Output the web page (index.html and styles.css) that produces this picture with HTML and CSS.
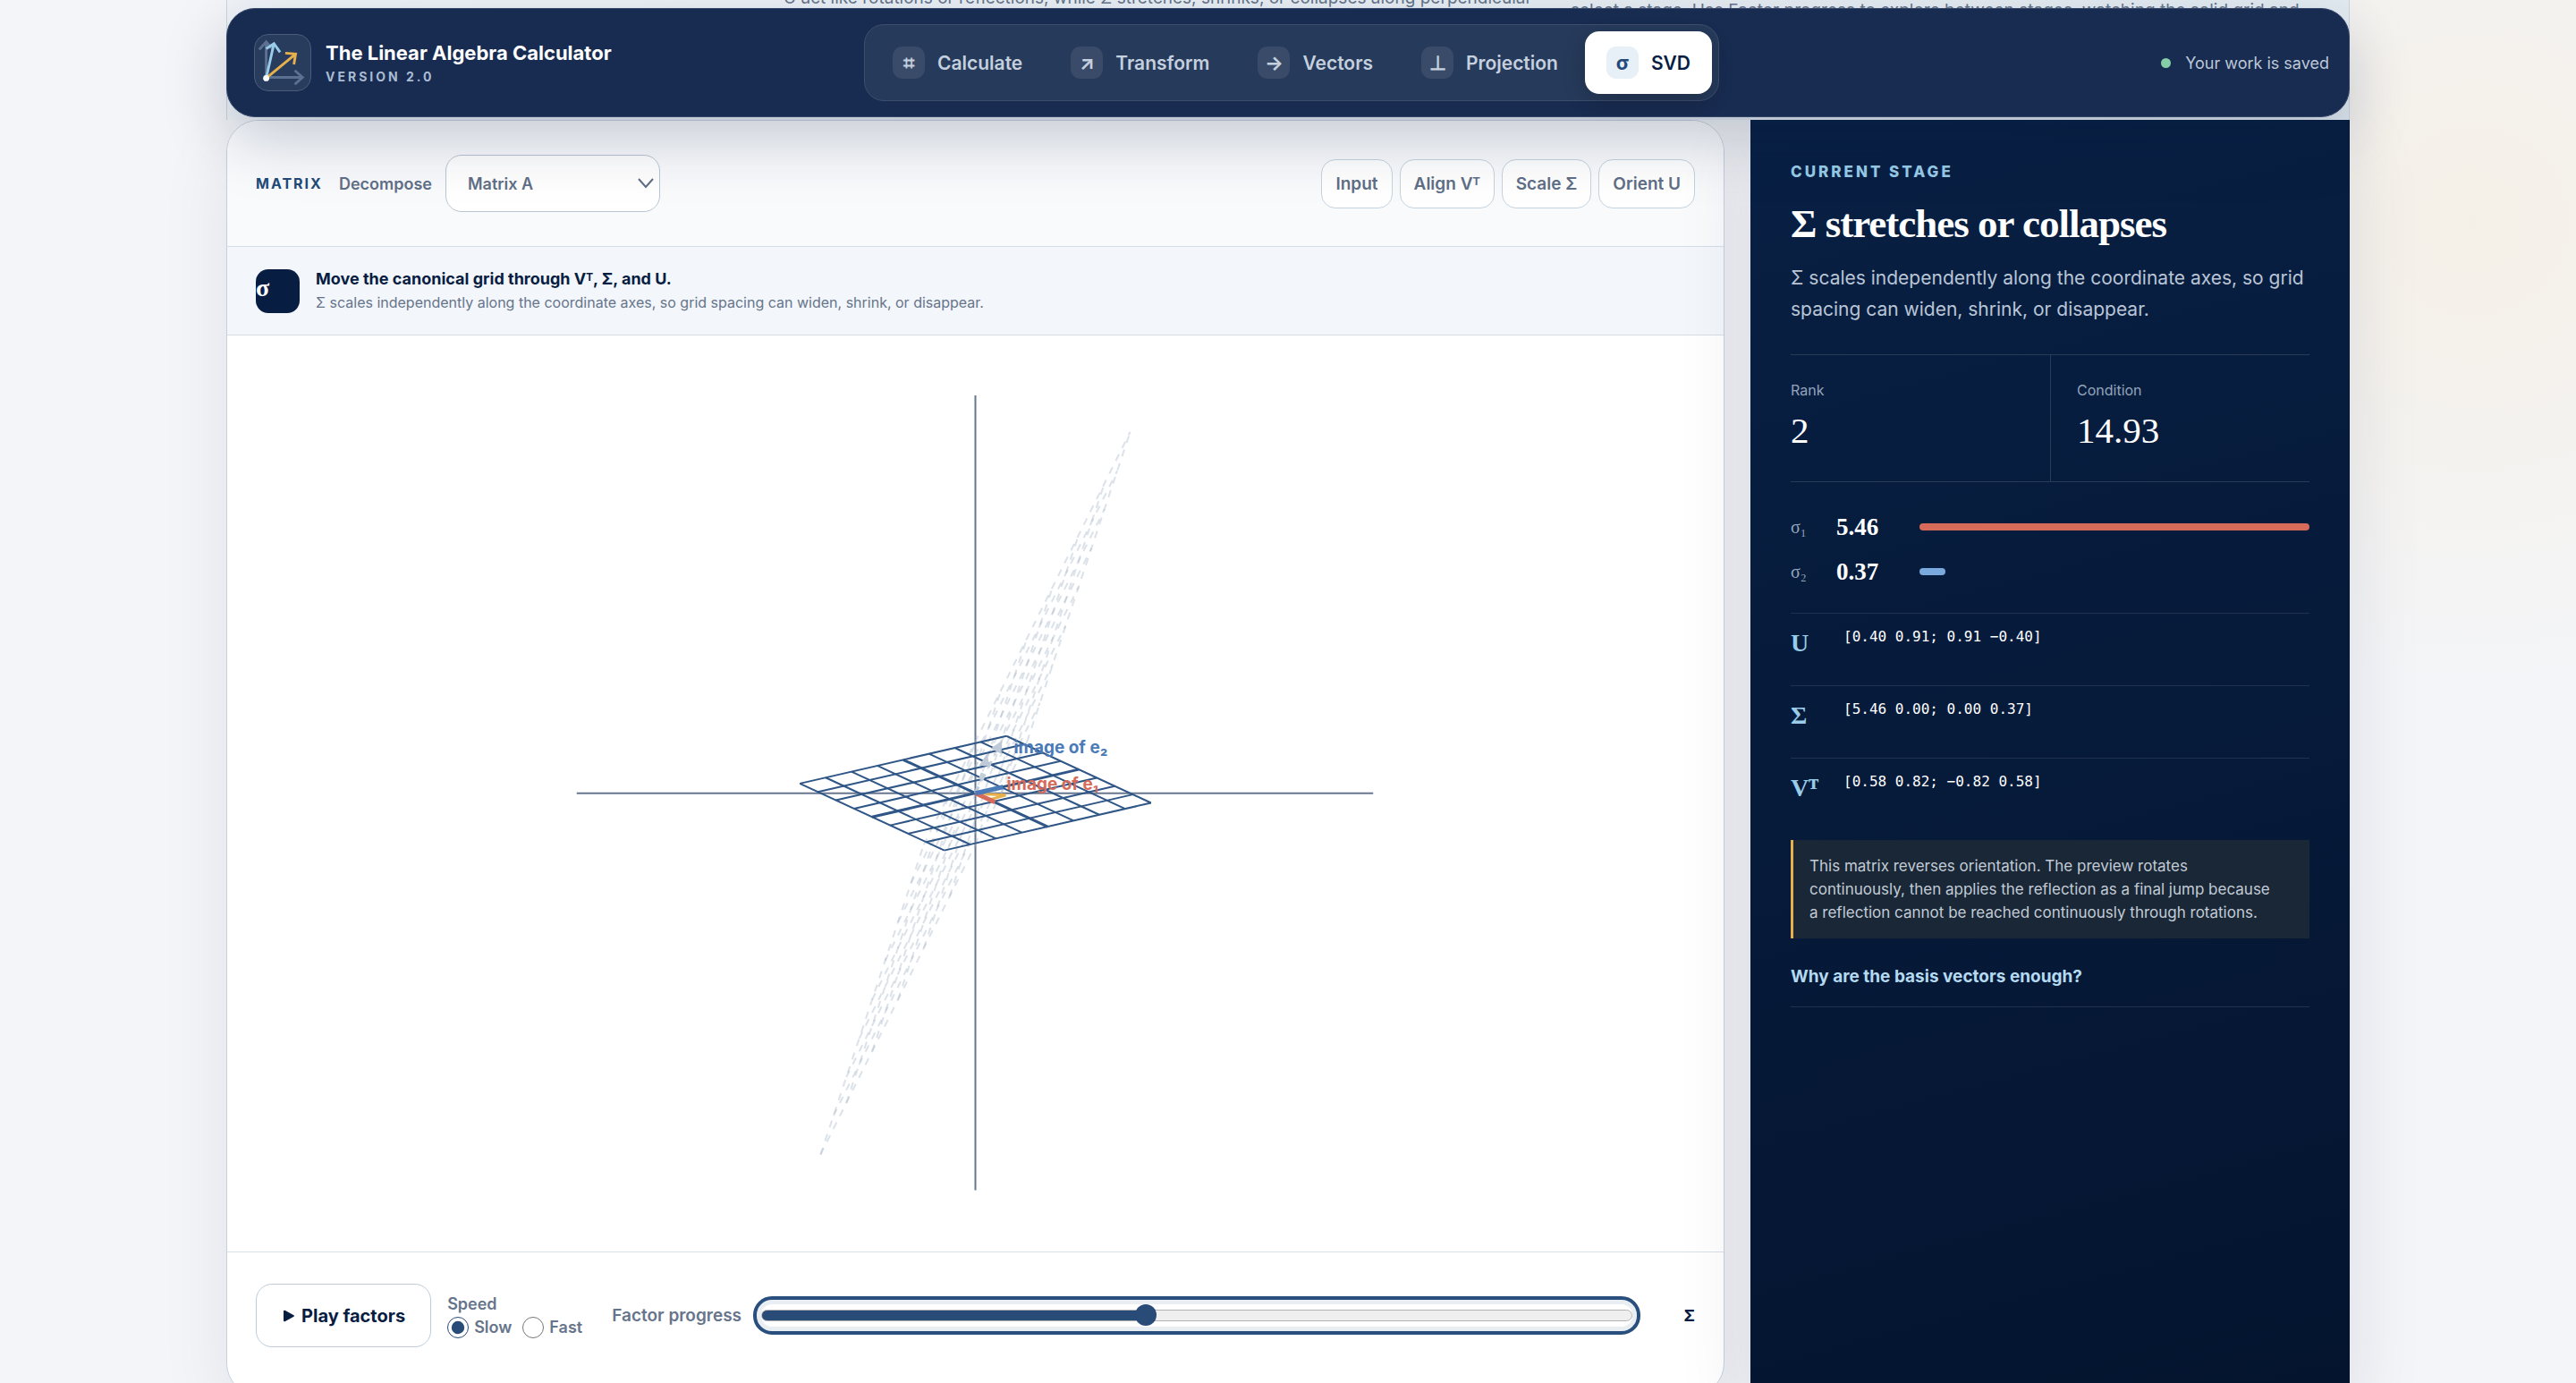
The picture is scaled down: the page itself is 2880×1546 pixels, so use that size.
FILE: index.html
```html
<!DOCTYPE html>
<html lang="en">

<head>
    <meta charset="UTF-8">
    <meta name="viewport" content="width=device-width, initial-scale=1.0">
    <title>The Linear Algebra Calculator</title>
    <link rel="stylesheet" href="styles.css">
</head>

<body>
    <header class="topbar">
        <div class="brand">
            <svg class="brand-mark" viewBox="0 0 64 64" fill="none" aria-hidden="true">
                <g stroke="#5c7091" stroke-width="3">
                    <path d="M13 49V8M5 17l8-9 8 9" />
                    <path d="M13 49h42M46 41l9 8-9 8" />
                </g>
                <path stroke="#98cce9" stroke-width="3" d="M13 50L22 10M13 16l9-6 7 10" />
                <path stroke="#e8b04a" stroke-width="3" d="M13 50L47 22M35 21l12 1-2 12" />
                <circle cx="13" cy="50" r="3.5" fill="#fff" />
            </svg>
            <div>
                <strong class="brand-name">The Linear Algebra Calculator</strong>
                <span class="brand-version">Version 2.0</span>
            </div>
        </div>
        <nav class="tabs" aria-label="Tools">
            <button class="tab" type="button"><span class="tab-icon">⌗</span>Calculate</button>
            <button class="tab" type="button"><span class="tab-icon">↗</span>Transform</button>
            <button class="tab" type="button"><span class="tab-icon">→</span>Vectors</button>
            <button class="tab" type="button"><span class="tab-icon">⊥</span>Projection</button>
            <button class="tab active" type="button"><span class="tab-icon">σ</span>SVD</button>
        </nav>
        <p class="saved">Your work is saved</p>
    </header>

    <main class="page">
        <section class="intro">
            <p class="intro-main">U act like rotations or reflections, while Σ stretches, shrinks, or collapses along perpendicular</p>
            <p class="intro-side">select a stage. Use Factor progress to explore between stages, watching the solid grid and</p>
        </section>

        <div class="workspace">
            <section class="board">
                <div class="toolbar">
                    <span class="toolbar-title">Matrix</span>
                    <label class="field-label" for="matrix">Decompose</label>
                    <div class="select-wrap">
                        <select id="matrix">
                            <option>Matrix A</option>
                        </select>
                        <svg viewBox="0 0 20 12" fill="none" aria-hidden="true"><path d="M2 1l8 9 8-9" stroke="#5f6f86" stroke-width="2" /></svg>
                    </div>
                    <div class="stages">
                        <button type="button">Input</button>
                        <button type="button">Align Vᵀ</button>
                        <button type="button">Scale Σ</button>
                        <button type="button">Orient U</button>
                    </div>
                </div>

                <div class="prompt">
                    <span class="prompt-icon">σ</span>
                    <div>
                        <strong>Move the canonical grid through Vᵀ, Σ, and U.</strong>
                        <p>Σ scales independently along the coordinate axes, so grid spacing can widen, shrink, or disappear.</p>
                    </div>
                </div>

                <svg class="plot" viewBox="-837 -512 1674 1025" role="img" aria-label="Grid under the current factors">
                    <path class="axis" d="M-446 0H445M0 -445V444" />
                    <!-- full product of the factors -->
                    <g transform="matrix(14.43 -43.3 28.87 -57.73 0 0)">
                        <path class="ghost" d="M-4 -4H4M-4 -3H4M-4 -2H4M-4 -1H4M-4 0H4M-4 1H4M-4 2H4M-4 3H4M-4 4H4" />
                        <path class="ghost" d="M-4 -4V4M-3 -4V4M-2 -4V4M-1 -4V4M0 -4V4M1 -4V4M2 -4V4M3 -4V4M4 -4V4" />
                    </g>
                    <!-- current stage -->
                    <g transform="matrix(20.2 9.35 28.9 -6.65 0 0)">
                        <path class="grid" d="M-4 -4H4M-4 -3H4M-4 -2H4M-4 -1H4M-4 1H4M-4 2H4M-4 3H4M-4 4H4" />
                        <path class="grid" d="M-4 -4V4M-3 -4V4M-2 -4V4M-1 -4V4M1 -4V4M2 -4V4M3 -4V4M4 -4V4" />
                        <path class="grid main" d="M-4 0H4M0 -4V4" />
                    </g>
                    <path class="ghost-vector" d="M0 0L10 -30M0 0L22 -44" />
                    <path class="ghost-head" d="M13 -44L4 -31L16 -30ZM30 -59L17 -50L29 -44Z" />
                    <path class="sum" d="M11 1L34 2L17 7" />
                    <path class="vector e1" d="M0 0L22 10" />
                    <path class="vector e2" d="M0 0L31 -7" />
                    <text class="plot-label e2" x="43" y="-45">image of e₂</text>
                    <text class="plot-label e1" x="35" y="-4">image of e₁</text>
                </svg>

                <div class="controls">
                    <button class="play" type="button"><svg viewBox="0 0 14 14" aria-hidden="true"><path d="M1 2q0-2 2-1l9 5q2 1 0 2l-9 5q-2 1-2-1z" /></svg>Play factors</button>
                    <fieldset class="speed">
                        <legend>Speed</legend>
                        <label><input type="radio" name="speed" checked>Slow</label>
                        <label><input type="radio" name="speed">Fast</label>
                    </fieldset>
                    <label class="progress-label" for="progress">Factor progress</label>
                    <input class="progress" id="progress" type="range" min="0" max="100" value="44">
                    <output class="progress-value" for="progress">Σ</output>
                </div>
            </section>

            <aside class="details">
                <p class="eyebrow">Current stage</p>
                <h2>Σ stretches or collapses</h2>
                <p class="lead">Σ scales independently along the coordinate axes, so grid spacing can widen, shrink, or disappear.</p>
                <dl class="facts">
                    <div>
                        <dt>Rank</dt>
                        <dd>2</dd>
                    </div>
                    <div>
                        <dt>Condition</dt>
                        <dd>14.93</dd>
                    </div>
                </dl>
                <div class="sigmas">
                    <div class="sigma"><span>σ₁</span><strong>5.46</strong><div class="bar"><i class="bar-one" style="width: 100%"></i></div></div>
                    <div class="sigma"><span>σ₂</span><strong>0.37</strong><div class="bar"><i class="bar-two" style="width: 6.7%"></i></div></div>
                </div>
                <dl class="factors">
                    <div>
                        <dt>U</dt>
                        <dd>[0.40 0.91; 0.91 −0.40]</dd>
                    </div>
                    <div>
                        <dt>Σ</dt>
                        <dd>[5.46 0.00; 0.00 0.37]</dd>
                    </div>
                    <div>
                        <dt>Vᵀ</dt>
                        <dd>[0.58 0.82; −0.82 0.58]</dd>
                    </div>
                </dl>
                <p class="note">This matrix reverses orientation. The preview rotates continuously, then applies the reflection as a final jump because a reflection cannot be reached continuously through rotations.</p>
                <details class="why">
                    <summary>Why are the basis vectors enough?</summary>
                </details>
            </aside>
        </div>
    </main>
</body>

</html>
```
FILE: styles.css
```css
* {
    box-sizing: border-box;
    margin: 0;
    padding: 0;
}

body {
    height: 100vh;
    overflow: hidden;
    font-family: Inter, "Liberation Sans", sans-serif;
    font-size: 18px;
    color: #071d42;
    background: radial-gradient(circle at 96% 16%, #f5f0e7 0, rgba(245, 240, 231, 0) 520px), #f4f5f8;
}

button,
select,
input {
    font: inherit;
    color: inherit;
}

.topbar {
    position: absolute;
    z-index: 2;
    top: 9px;
    left: 253px;
    right: 253px;
    height: 122px;
    padding: 0 22px 0 30px;
    display: grid;
    grid-template-columns: 1fr auto 1fr;
    align-items: center;
    color: #fff;
    background: #182b50;
    border: 1px solid #33466a;
    border-radius: 32px;
    box-shadow: 0 24px 70px rgba(7, 29, 66, 0.22);
}

.brand {
    display: flex;
    align-items: center;
    gap: 16px;
}

.brand-mark {
    width: 64px;
    height: 64px;
    background: #283c5e;
    border: 1px solid #4a5c7a;
    border-radius: 16px;
}

.brand-name,
.brand-version {
    display: block;
}

.brand-name {
    font-size: 22px;
    line-height: 28px;
}

.brand-version {
    margin-top: 4px;
    font-size: 14px;
    line-height: 18px;
    font-weight: 700;
    letter-spacing: 3px;
    text-transform: uppercase;
    color: #a9bcd3;
}

.tabs {
    display: flex;
    gap: 6px;
    padding: 7px;
    background: #263a5b;
    border: 1px solid #3d4f6d;
    border-radius: 22px;
}

.tab {
    height: 70px;
    padding: 0 24px;
    display: flex;
    align-items: center;
    gap: 14px;
    font-size: 21px;
    font-weight: 600;
    color: #c5d0de;
    background: none;
    border: 0;
    border-radius: 16px;
}

.tab-icon {
    width: 36px;
    height: 36px;
    display: grid;
    place-items: center;
    font-size: 22px;
    font-weight: 700;
    background: #394b69;
    border-radius: 11px;
}

.tab.active {
    color: #071d42;
    background: #fff;
    box-shadow: 0 8px 24px rgba(0, 0, 0, 0.2);
}

.tab.active .tab-icon {
    color: #234a78;
    background: #e7f0f7;
}

.saved {
    justify-self: end;
    display: flex;
    align-items: center;
    gap: 16px;
    color: #bcc8d8;
}

.saved::before {
    content: "";
    width: 11px;
    height: 11px;
    border-radius: 50%;
    background: #86cfa6;
}

.page {
    padding: 0 253px;
}

.intro {
    height: 153px;
    margin-top: -19px;
    padding-left: 622px;
    display: grid;
    grid-template-columns: 880px 1fr;
    font-size: 19px;
    line-height: 34px;
    white-space: nowrap;
    color: #66758b;
    background: linear-gradient(90deg, #f0f4f8, #e4ecf2);
    border: solid #cbd6e0;
    border-width: 0 1px;
}

.intro-side {
    padding-top: 14px;
}

.workspace {
    display: grid;
    grid-template-columns: 5fr 2fr;
    gap: 29px;
}

.board {
    overflow: hidden;
    background: #fff;
    border: 1px solid #c5d0dc;
    border-radius: 36px;
    box-shadow: 0 24px 80px rgba(7, 29, 66, 0.08);
}

.toolbar {
    height: 140px;
    padding: 0 32px;
    display: flex;
    align-items: center;
    color: #5f6f86;
    font-weight: 600;
    background: #f9fafc;
}

.toolbar-title {
    margin-right: 18px;
    font-size: 16px;
    font-weight: 700;
    letter-spacing: 2px;
    text-transform: uppercase;
    color: #234a78;
}

.select-wrap {
    position: relative;
    margin-left: 15px;
}

.select-wrap select {
    display: block;
    width: 240px;
    height: 64px;
    padding: 0 24px;
    appearance: none;
    background: #fff;
    border: 1px solid #b9c5d3;
    border-radius: 18px;
}

.select-wrap svg {
    position: absolute;
    top: 26px;
    right: 6px;
    width: 20px;
    height: 12px;
}

.stages {
    margin-left: auto;
    display: flex;
    gap: 8px;
}

.stages button {
    height: 55px;
    padding: 0 15px;
    font-size: 19px;
    background: #fff;
    border: 1px solid #c5d3df;
    border-radius: 16px;
}

.prompt {
    height: 100px;
    padding: 0 32px;
    display: flex;
    align-items: center;
    gap: 18px;
    background: #f3f6fa;
    border: solid #d5dde6;
    border-width: 1px 0;
}

.prompt-icon {
    width: 49px;
    height: 49px;
    font: bold 28px/42px "Liberation Serif", serif;
    color: #fff;
    background: #071d42;
    border-radius: 14px;
}

.prompt strong {
    display: block;
    line-height: 26px;
}

.prompt p {
    font-size: 16px;
    line-height: 26px;
    color: #66758b;
}

.plot {
    display: block;
    width: 100%;
}

.plot path {
    fill: none;
    vector-effect: non-scaling-stroke;
}

.plot .axis {
    stroke: #68778f;
    stroke-width: 2;
}

.plot .ghost {
    stroke: #a9b8ca;
    stroke-width: 2;
    stroke-dasharray: 8 8;
    opacity: 0.4;
}

.plot .grid {
    stroke: #2f5686;
    stroke-width: 2;
}

.plot .grid.main {
    stroke-width: 3;
}

.plot .ghost-vector {
    stroke: #c3cdd9;
    stroke-width: 3;
    stroke-dasharray: 8 8;
}

.plot .ghost-head {
    fill: #bfc9d8;
}

.plot .sum {
    stroke: #e8b04a;
    stroke-width: 3;
}

.plot .vector {
    stroke-width: 5;
}

.plot .vector.e1 {
    stroke: #d66b5a;
}

.plot .vector.e2 {
    stroke: #4a7ab8;
}

.plot-label {
    font-size: 19px;
    font-weight: 700;
}

.plot-label.e1 {
    fill: #d66b5a;
}

.plot-label.e2 {
    fill: #4a7ab8;
}

.controls {
    height: 160px;
    padding: 0 32px 18px;
    display: flex;
    align-items: center;
    font-weight: 600;
    color: #66758b;
    border-top: 1px solid #d8dfe7;
}

.play {
    height: 71px;
    padding: 0 28px;
    display: flex;
    align-items: center;
    gap: 6px;
    font-size: 20px;
    font-weight: 700;
    color: #071d42;
    background: #fff;
    border: 1px solid #bfcbd8;
    border-radius: 18px;
}

.play svg {
    width: 16px;
    height: 14px;
    fill: #071d42;
}

.speed {
    margin: 0 33px 0 18px;
    display: flex;
    gap: 12px;
    border: 0;
}

.speed legend {
    line-height: 26px;
}

.speed label {
    display: flex;
    align-items: center;
    gap: 6px;
    line-height: 26px;
}

.speed input {
    width: 24px;
    height: 24px;
    accent-color: #284b78;
}

.progress-label {
    font-size: 19px;
}

.progress {
    flex: 1;
    min-width: 0;
    height: 25px;
    margin: 0 10px 0 22px;
    appearance: none;
    background: none;
    border-radius: 12px;
    outline: 4px solid #284f7d;
    outline-offset: 5px;
    box-shadow: 0 0 0 5px #e9eef3;
}

.progress::-webkit-slider-runnable-track {
    height: 13px;
    background: linear-gradient(90deg, #284b78 44%, #efefef 44%);
    border: 1px solid #b2b2b2;
    border-radius: 7px;
}

.progress::-webkit-slider-thumb {
    appearance: none;
    width: 24px;
    height: 24px;
    margin-top: -7px;
    background: #284b78;
    border-radius: 50%;
}

.progress-value {
    width: 60px;
    text-align: right;
    font-weight: 700;
    color: #071d42;
}

.details {
    padding: 45px;
    color: #fff;
    background: linear-gradient(165deg, #082044, #04142f);
    box-shadow: 0 24px 80px rgba(7, 29, 66, 0.11);
}

.eyebrow {
    font-size: 17px;
    line-height: 26px;
    font-weight: 800;
    letter-spacing: 3px;
    text-transform: uppercase;
    color: #98cce9;
}

.details h2 {
    margin-top: 17px;
    font: bold 45px/56px "Liberation Serif", serif;
    letter-spacing: -1px;
}

.lead {
    margin-top: 15px;
    font-size: 21px;
    line-height: 35px;
    color: #b9c5d6;
}

.facts {
    margin-top: 33px;
    display: grid;
    grid-template-columns: 1fr 1fr;
    border: solid #2a3b58;
    border-width: 1px 0;
}

.facts div {
    height: 141px;
    padding-top: 25px;
}

.facts div + div {
    padding-left: 29px;
    border-left: 1px solid #2a3b58;
}

.facts dt {
    font-size: 16px;
    line-height: 28px;
    color: #93a4bc;
}

.facts dd {
    font: 41px/62px "Liberation Serif", serif;
}

.sigmas {
    padding: 25px 0 21px;
    font-family: "Liberation Serif", serif;
}

.sigma {
    height: 50px;
    display: grid;
    grid-template-columns: 51px 93px 1fr;
    align-items: center;
}

.sigma span {
    font-size: 20px;
    color: #93a4bc;
}

.sigma strong {
    font-size: 27px;
}

.bar i {
    display: block;
    height: 8px;
    border-radius: 4px;
}

.bar-one {
    background: #d66b5a;
}

.bar-two {
    background: #79a9dd;
}

.factors div {
    height: 81px;
    padding-top: 16px;
    display: grid;
    grid-template-columns: 59px 1fr;
    border-top: 1px solid #20324f;
}

.factors dt {
    font: bold 28px/34px "Liberation Serif", serif;
    color: #98cce9;
}

.factors dd {
    font: 16px/20px "DejaVu Sans Mono", monospace;
}

.note {
    margin-top: 11px;
    padding: 16px 40px 16px 18px;
    font-size: 17px;
    line-height: 26px;
    color: #c3cbd5;
    background: #192737;
    border-left: 3px solid #e8b04a;
}

.why {
    padding: 28px 0 19px;
    border-bottom: 1px solid #20324f;
}

.why summary {
    font-size: 19px;
    font-weight: 700;
    line-height: 29px;
    list-style: none;
    color: #b4daf1;
}
```
